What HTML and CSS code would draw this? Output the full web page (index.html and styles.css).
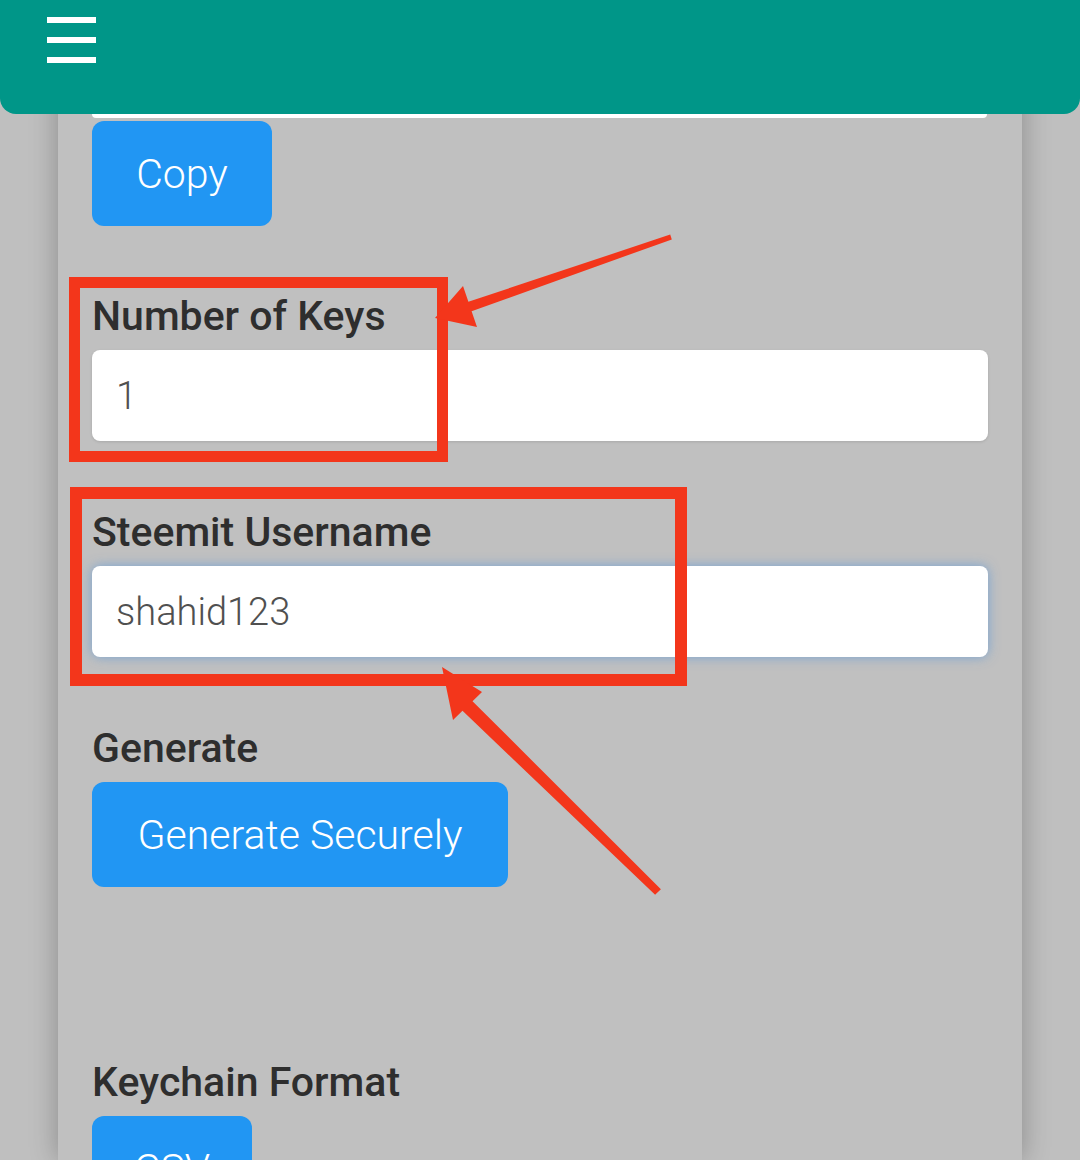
FILE: index.html
```html
<!DOCTYPE html>
<html lang="en">
<head>
<meta charset="utf-8">
<title>Key Generator</title>
<link rel="stylesheet" href="styles.css">
</head>
<body>
<header class="appbar">
  <button class="menu" aria-label="Menu"><span></span><span></span><span></span></button>
</header>

<main class="page">
  <div class="output"></div>
  <button class="btn btn-copy">Copy</button>

  <div class="field">
    <label class="label">Number of Keys</label>
    <div class="input">1</div>
  </div>

  <div class="field">
    <label class="label">Steemit Username</label>
    <div class="input input-focus">shahid123</div>
  </div>

  <div class="field">
    <label class="label">Generate</label>
    <button class="btn btn-generate">Generate Securely</button>
  </div>

  <div class="field field-format">
    <label class="label">Keychain Format</label>
    <button class="btn btn-csv">CSV</button>
  </div>
</main>

<svg class="annotations" width="1080" height="1160" viewBox="0 0 1080 1160" aria-hidden="true">
  <rect x="74.5" y="282.5" width="368" height="174" fill="none" stroke="#f3361b" stroke-width="11"/>
  <rect x="76" y="493" width="605" height="187" fill="none" stroke="#f3361b" stroke-width="12"/>
  <polygon fill="#f3361b" points="670.2,234.6 468.4,301.8 463,286 435,318 477,327 471.6,311.2 671.8,239.4"/>
  <polygon fill="#f3361b" points="660.9,889.2 472.5,701.2 482,692 442,667 453,720 462.5,710.8 655.1,894.8"/>
</svg>
</body>
</html>
```

FILE: styles.css
```css
html, body {
  margin: 0;
  padding: 0;
}

body {
  position: relative;
  width: 1080px;
  height: 1160px;
  overflow: hidden;
  background: #bfbfbf;
  font-family: Roboto, "Noto Sans", "Liberation Sans", sans-serif;
}

.appbar {
  position: absolute;
  top: 0;
  left: 0;
  right: 0;
  height: 114px;
  background: #009688;
  border-radius: 0 0 16px 16px;
  z-index: 5;
}

.menu {
  display: flex;
  flex-direction: column;
  gap: 14px;
  margin: 17px 0 0 47px;
  padding: 0;
  border: 0;
  background: none;
}

.menu span {
  display: block;
  width: 49px;
  height: 6px;
  background: #ffffff;
}

.page {
  width: 964px;
  height: 1160px;
  margin: 0 auto;
  padding: 0 34px;
  box-sizing: border-box;
  background: #c0c0c0;
  box-shadow: 0 0 26px rgba(0, 0, 0, 0.28);
  display: flex;
  flex-direction: column;
  align-items: flex-start;
}

.page > * {
  flex-shrink: 0;
}

.output {
  align-self: stretch;
  height: 118px;
  margin-right: 1px;
  background: #ffffff;
  border-radius: 0 0 4px 4px;
}

.btn {
  flex-shrink: 0;
  height: 105px;
  border: 0;
  border-radius: 12px;
  background: #2196f3;
  color: #ffffff;
  font-family: Roboto, "Noto Sans", sans-serif;
  font-size: 41px;
  font-weight: 300;
  padding: 0;
}

.btn-copy {
  width: 180px;
  margin-top: 3px;
}

.btn-generate {
  width: 416px;
}

.btn-csv {
  width: 160px;
}

.field {
  align-self: stretch;
  display: flex;
  flex-direction: column;
  align-items: flex-start;
  gap: 10px;
  margin-top: 67px;
}

.btn-copy + .field {
  margin-top: 66px;
}

.field > * {
  flex-shrink: 0;
}

.field-format {
  margin-top: 171px;
}

.label {
  display: block;
  font-size: 41px;
  line-height: 48px;
  font-weight: 500;
  color: #2e2e2e;
}

.input {
  align-self: stretch;
  height: 91px;
  box-sizing: border-box;
  padding-left: 24px;
  display: flex;
  align-items: center;
  background: #ffffff;
  border-radius: 8px;
  font-size: 38px;
  font-weight: 300;
  color: #505050;
  box-shadow: 0 1px 3px rgba(0, 0, 0, 0.12);
}

.input-focus {
  box-shadow: 0 0 12px rgba(100, 155, 215, 0.8);
}

.annotations {
  position: absolute;
  top: 0;
  left: 0;
  pointer-events: none;
  z-index: 4;
}
```
